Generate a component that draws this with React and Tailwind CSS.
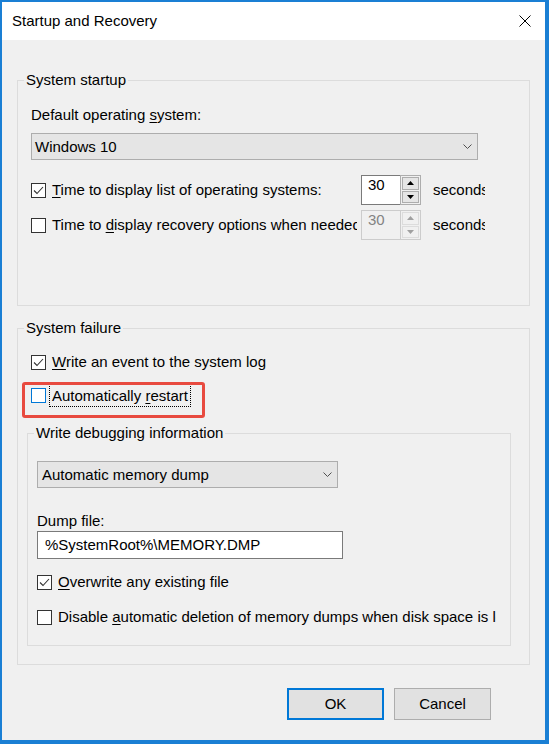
import React from "react";

const Check = ({ checked, focus }) => (
	<span
		className={`flex h-[15px] w-[15px] shrink-0 items-center justify-center border bg-white ${
			focus ? "border-[#0078d7]" : "border-[#333333]"
		}`}
	>
		{checked && (
			<svg width="11" height="9" viewBox="0 0 11 9">
				<path d="M1 4.5 L4 7.5 L10 1" fill="none" stroke="#333333" strokeWidth="1.1" />
			</svg>
		)}
	</span>
);

const Key = ({ children }) => (
	<span className="underline decoration-1 underline-offset-[2px]">{children}</span>
);

const Arrow = ({ up, color }) => (
	<svg width="7" height="4" viewBox="0 0 7 4">
		<path d={up ? "M0 4 L3.5 0 L7 4 Z" : "M0 0 L3.5 4 L7 0 Z"} fill={color} />
	</svg>
);

const Spinner = ({ disabled }) => (
	<div className="flex h-[30px] w-[60px] shrink-0">
		<div
			className={`flex-1 border border-r-0 pl-[6px] pt-px leading-[16px] ${
				disabled
					? "border-[#cccccc] bg-[#f0f0f0] text-[#838383]"
					: "border-[#7a7a7a] bg-white"
			}`}
		>
			30
		</div>
		<div
			className={`flex w-[21px] flex-col gap-px border p-px ${
				disabled ? "border-[#cccccc] bg-[#f0f0f0]" : "border-[#adadad] bg-[#f0f0f0]"
			}`}
		>
			<div
				className={`flex flex-1 items-center justify-center border ${
					disabled ? "border-[#dcdcdc] bg-[#f0f0f0]" : "border-[#adadad] bg-[#e5e5e5]"
				}`}
			>
				<Arrow up color={disabled ? "#a0a0a0" : "#000000"} />
			</div>
			<div
				className={`flex flex-1 items-center justify-center border ${
					disabled ? "border-[#dcdcdc] bg-[#f0f0f0]" : "border-[#adadad] bg-[#e5e5e5]"
				}`}
			>
				<Arrow color={disabled ? "#a0a0a0" : "#000000"} />
			</div>
		</div>
	</div>
);

const Select = ({ value, className }) => (
	<div
		className={`flex h-[27px] items-center justify-between border border-[#adadad] bg-[#e5e5e5] pr-[5px] ${className}`}
	>
		<span>{value}</span>
		<svg width="9" height="5" viewBox="0 0 9 5">
			<path d="M0.5 0.5 L4.5 4.5 L8.5 0.5" fill="none" stroke="#505050" strokeWidth="1" />
		</svg>
	</div>
);

export default function App() {
	return (
		<div className="flex h-[744px] w-[549px] flex-col border-b-4 border-l-2 border-r-4 border-t-2 border-[#1a7fd4] font-['Liberation_Sans',Arial,sans-serif] text-[15px] leading-[20px] text-black">
			{/* title bar */}
			<div className="flex h-[38px] shrink-0 items-center justify-between bg-white pl-[10px] pr-[14px]">
				<span>Startup and Recovery</span>
				<svg width="12" height="12" viewBox="0 0 12 12">
					<path d="M0.5 0.5 L11.5 11.5 M11.5 0.5 L0.5 11.5" stroke="#000000" strokeWidth="1" />
				</svg>
			</div>

			<div className="flex-1 bg-[#f0f0f0] px-[15px] pt-[30px]">
				{/* System startup */}
				<fieldset className="border border-[#dcdcdc] pb-[65px]">
					<legend className="ml-[6px] px-[2px]">System startup</legend>
					<div className="ml-[13px] mt-[15px]">
						Default operating <Key>s</Key>ystem:
					</div>
					<Select value="Windows 10" className="ml-[13px] mt-[8px] w-[447px] pl-[3px]" />

					<div className="ml-[13px] mt-[15px] flex h-[30px] items-center">
						<div className="flex w-[326px] items-center gap-[6px] overflow-hidden whitespace-nowrap">
							<Check checked />
							<span>
								<Key>T</Key>ime to display list of operating systems:
							</span>
						</div>
						<div className="ml-[4px]">
							<Spinner />
						</div>
						<div className="ml-[12px] w-[52px] overflow-hidden whitespace-nowrap">seconds</div>
					</div>

					<div className="ml-[13px] mt-[5px] flex h-[30px] items-center">
						<div className="flex w-[326px] items-center gap-[6px] overflow-hidden whitespace-nowrap">
							<Check />
							<span>
								Time to <Key>d</Key>isplay recovery options when needed:
							</span>
						</div>
						<div className="ml-[4px]">
							<Spinner disabled />
						</div>
						<div className="ml-[12px] w-[52px] overflow-hidden whitespace-nowrap">seconds</div>
					</div>
				</fieldset>

				{/* System failure */}
				<fieldset className="mt-[12px] border border-[#dcdcdc] pb-[18px]">
					<legend className="ml-[6px] px-[2px]">System failure</legend>
					<div className="ml-[13px] mt-[14px] flex h-[20px] items-center gap-[6px]">
						<Check checked />
						<span>
							<Key>W</Key>rite an event to the system log
						</span>
					</div>

					<div className="relative ml-[13px] mt-[12px] flex h-[23px] items-center gap-[3px]">
						<Check focus />
						<span className="flex h-[23px] items-center border border-dotted border-black px-[2px]">
							<span>
								Automatically <Key>r</Key>estart
							</span>
						</span>
						<span className="pointer-events-none absolute left-[-9px] top-[-2px] h-[36px] w-[183px] rounded-[3px] border-[3px] border-[#e84a3f]" />
					</div>

					{/* Write debugging information */}
					<fieldset className="ml-[9px] mr-[18px] mt-[16px] border border-[#dcdcdc] pb-[18px]">
						<legend className="ml-[6px] px-[2px]">Write debugging information</legend>
						<Select value="Automatic memory dump" className="ml-[9px] mt-[18px] w-[301px] pl-[4px]" />

						<div className="ml-[9px] mt-[23px]">Dump file:</div>
						<div className="ml-[9px] flex h-[28px] w-[306px] items-center border border-[#7a7a7a] bg-white pl-[7px]">
							%SystemRoot%\MEMORY.DMP
						</div>

						<div className="ml-[9px] mt-[13px] flex h-[20px] items-center gap-[6px]">
							<Check checked />
							<span>
								<Key>O</Key>verwrite any existing file
							</span>
						</div>

						<div className="ml-[9px] mt-[15px] flex h-[20px] w-[459px] items-center gap-[6px] overflow-hidden whitespace-nowrap">
							<Check />
							<span>
								Disable <Key>a</Key>utomatic deletion of memory dumps when disk space is low
							</span>
						</div>
					</fieldset>
				</fieldset>

				{/* buttons */}
				<div className="mt-[23px] flex justify-end gap-[10px] pr-[39px]">
					<button className="flex h-[32px] w-[97px] items-center justify-center border-2 border-[#0078d7] bg-[#e1e1e1]">
						OK
					</button>
					<button className="flex h-[32px] w-[97px] items-center justify-center border border-[#adadad] bg-[#e1e1e1]">
						Cancel
					</button>
				</div>
			</div>
		</div>
	);
}
